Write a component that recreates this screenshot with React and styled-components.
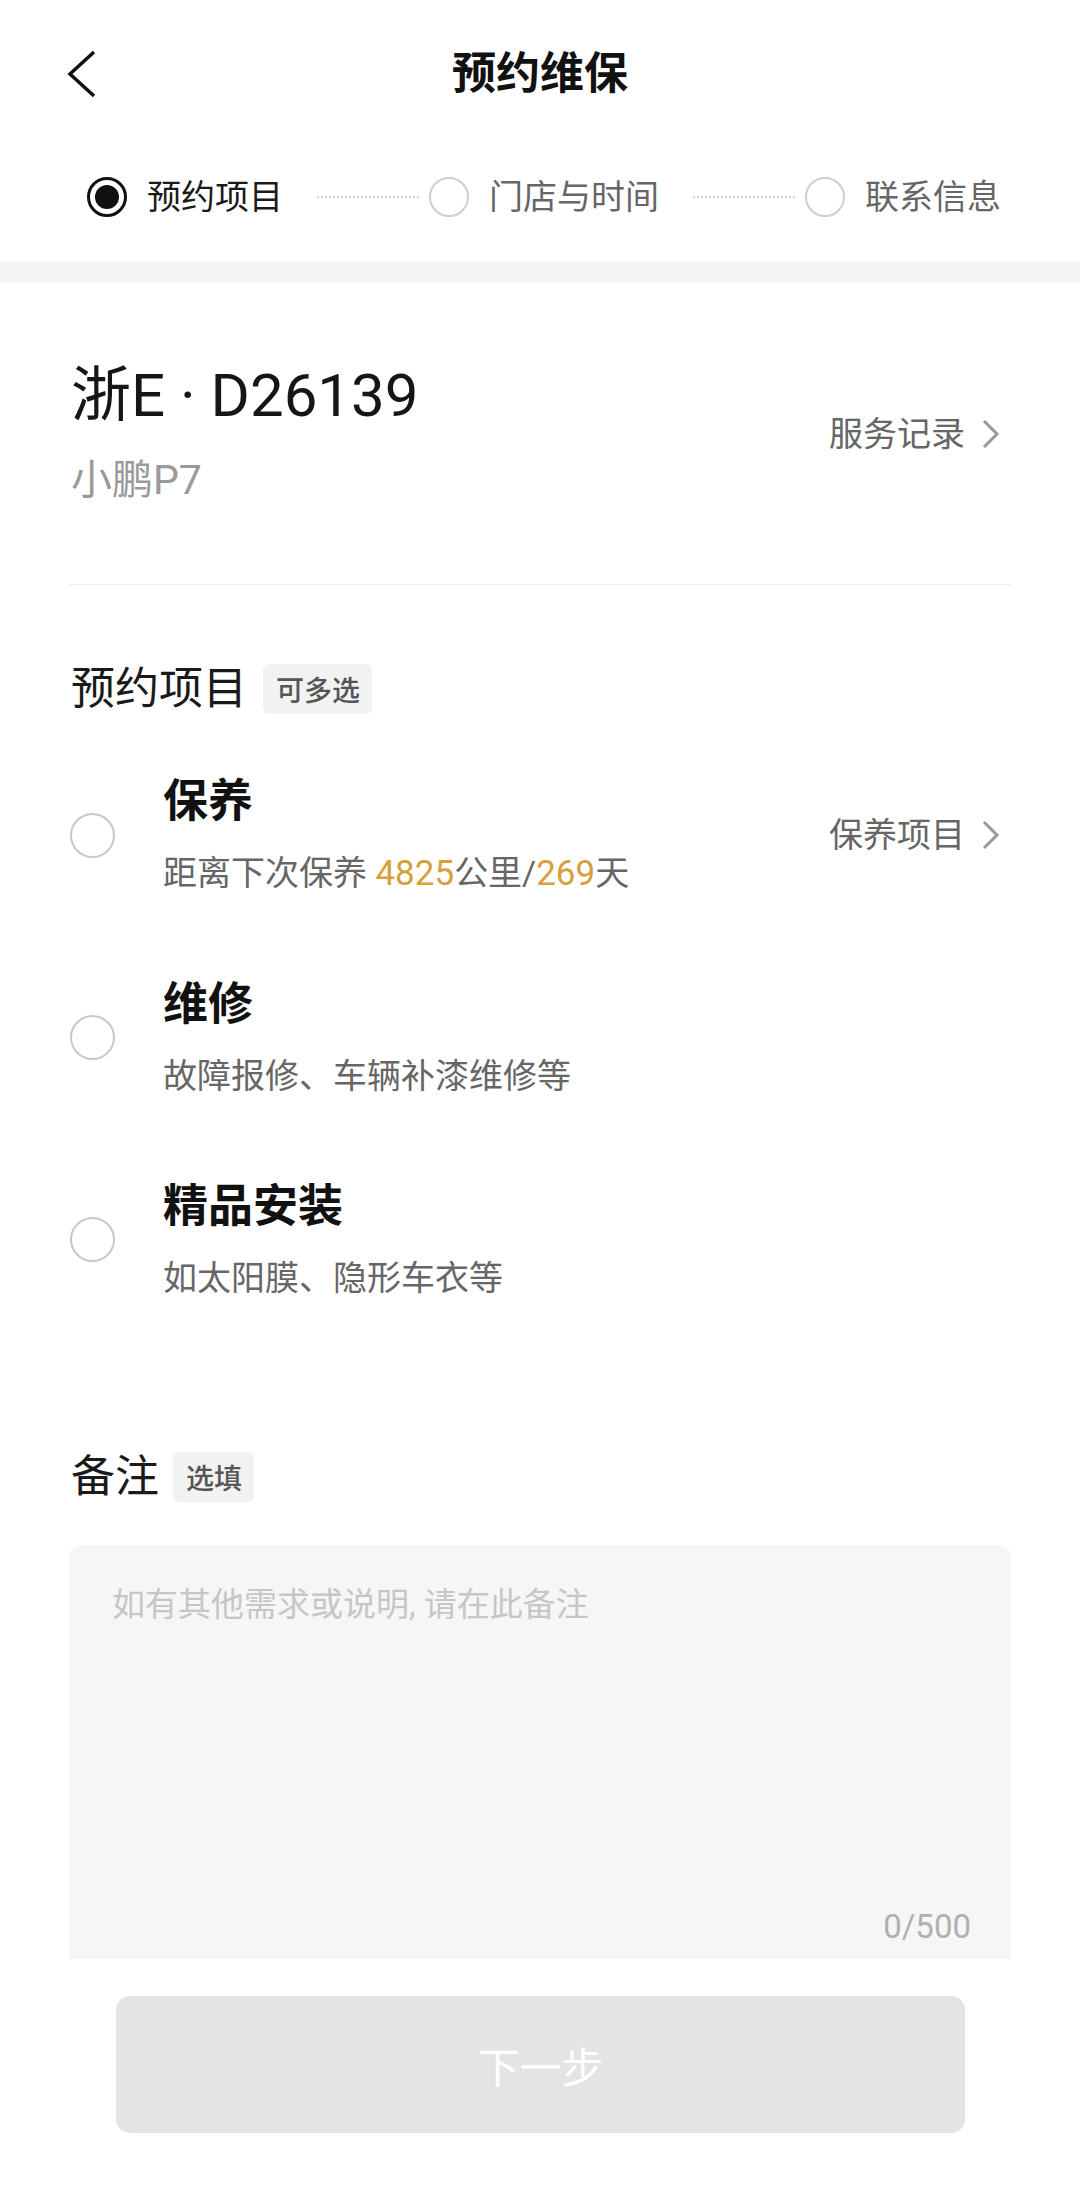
import React from "react";
import styled, { createGlobalStyle } from "styled-components";

const GlobalStyle = createGlobalStyle`
  html, body {
    margin: 0;
    padding: 0;
    background: #ffffff;
  }
  body {
    font-family: Roboto, "Noto Sans CJK SC", sans-serif;
    color: #1a1a1a;
  }
`;

const SPage = styled.div`
  display: flex;
  flex-direction: column;
  width: 1080px;
  min-height: 2192px;
  background: #ffffff;
`;

const SNavBar = styled.div`
  display: grid;
  grid-template-columns: 1fr auto 1fr;
  align-items: center;
  height: 148px;
  padding: 0 67px;
`;

const SBackButton = styled.div`
  display: flex;
  align-items: center;
  width: 40px;
  height: 48px;
`;

const STitle = styled.div`
  font-size: 44px;
  font-weight: 700;
  line-height: 1;
  color: #111111;
`;

const SSteps = styled.div`
  display: flex;
  align-items: center;
  padding: 29px 0 44px 87px;
`;

const SStep = styled.div`
  display: flex;
  align-items: center;
  gap: 20px;
  font-size: 34px;
  line-height: 40px;
  color: ${(p) => (p.$active ? "#1a1a1a" : "#666666")};
`;

const SStepDot = styled.span`
  box-sizing: border-box;
  display: flex;
  align-items: center;
  justify-content: center;
  width: 40px;
  height: 40px;
  border-radius: 50%;
  border: ${(p) => (p.$active ? "3px solid #111111" : "2.5px solid #cfcfcf")};

  &::after {
    content: "";
    display: ${(p) => (p.$active ? "block" : "none")};
    width: 24px;
    height: 24px;
    border-radius: 50%;
    background: #111111;
  }
`;

const SConnector = styled.span`
  width: 102px;
  margin: 0 10px 0 34px;
  border-top: 2px dotted #d2d2d2;
`;

const SBand = styled.div`
  height: 22px;
  background: #f5f5f5;
`;

const SContent = styled.div`
  display: flex;
  flex-direction: column;
  padding: 0 69px;
`;

const SCarRow = styled.div`
  display: flex;
  align-items: center;
  justify-content: space-between;
  padding: 80px 0 80px 2px;
  border-bottom: 1.5px solid #eeeeee;
`;

const SCarInfo = styled.div`
  display: flex;
  flex-direction: column;
  gap: 27px;
`;

const SPlate = styled.div`
  font-size: 60px;
  line-height: 66px;
  color: #161616;
`;

const SModel = styled.div`
  font-size: 41px;
  line-height: 48px;
  color: #9a9a9a;
`;

const SLink = styled.div`
  display: flex;
  align-items: center;
  gap: 16px;
  font-size: 34px;
  line-height: 44px;
  color: #666666;
  padding-right: 11px;
`;

const SSectionHead = styled.div`
  display: flex;
  align-items: center;
  gap: ${(p) => p.$gap}px;
  margin-top: ${(p) => p.$top}px;
  padding-left: 2px;
`;

const SHeadText = styled.div`
  font-size: 44px;
  line-height: 52px;
  color: #1a1a1a;
`;

const STag = styled.span`
  display: flex;
  align-items: center;
  height: 50px;
  padding: 0 12px 0 13px;
  border-radius: 6px;
  background: #f2f2f2;
  font-size: 28px;
  font-weight: 500;
  color: #555555;
`;

const SOptionList = styled.div`
  display: flex;
  flex-direction: column;
  gap: 81px;
  margin-top: 59px;
`;

const SOption = styled.div`
  display: flex;
  align-items: center;
  padding-left: 1px;
`;

const SRadio = styled.span`
  box-sizing: border-box;
  flex: none;
  width: 45px;
  height: 45px;
  border-radius: 50%;
  border: 2.5px solid #c8c8c8;
`;

const SOptionBody = styled.div`
  display: flex;
  flex-direction: column;
  gap: 21px;
  flex: 1;
  margin-left: 48px;
`;

const SOptionTitle = styled.div`
  font-size: 45px;
  font-weight: 700;
  line-height: 56px;
  color: #111111;
`;

const SOptionDesc = styled.div`
  font-size: 34px;
  line-height: 44px;
  color: #666666;
`;

const SHighlight = styled.span`
  font-size: 35px;
  color: #d6a03c;
`;

const SNoteBox = styled.div`
  display: flex;
  flex-direction: column;
  justify-content: space-between;
  box-sizing: border-box;
  height: 414px;
  margin-top: 42px;
  padding: 38px 40px 10px 43px;
  border-radius: 12px 12px 0 0;
  background: #f6f6f6;
`;

const SPlaceholder = styled.div`
  font-size: 33px;
  line-height: 44px;
  color: #c6c6c6;
`;

const SCounter = styled.div`
  align-self: flex-end;
  font-size: 33px;
  line-height: 44px;
  color: #b0b0b0;
`;

const SFooter = styled.div`
  display: flex;
  padding: 37px 115px 60px 116px;
`;

const SNextButton = styled.div`
  display: flex;
  align-items: center;
  justify-content: center;
  flex: 1;
  height: 137px;
  border-radius: 14px;
  background: #e4e4e4;
  font-size: 42px;
  color: #ffffff;
`;

function BackIcon() {
  return (
    <svg width="30" height="48" viewBox="0 0 30 48" fill="none">
      <polyline points="27,2 3,24 27,46" stroke="#111" strokeWidth="3.5" strokeLinejoin="miter" />
    </svg>
  );
}

function ChevronRight() {
  return (
    <svg width="19" height="30" viewBox="0 0 19 30" fill="none">
      <polyline points="3,2 16,15 3,28" stroke="#999" strokeWidth="3" />
    </svg>
  );
}

function Step({ active, label }) {
  return (
    <SStep $active={active}>
      <SStepDot $active={active} />
      {label}
    </SStep>
  );
}

function Option({ title, children, action }) {
  return (
    <SOption>
      <SRadio />
      <SOptionBody>
        <SOptionTitle>{title}</SOptionTitle>
        <SOptionDesc>{children}</SOptionDesc>
      </SOptionBody>
      {action && (
        <SLink>
          {action}
          <ChevronRight />
        </SLink>
      )}
    </SOption>
  );
}

export default function App() {
  return (
    <SPage>
      <GlobalStyle />
      <SNavBar>
        <SBackButton>
          <BackIcon />
        </SBackButton>
        <STitle>预约维保</STitle>
        <span />
      </SNavBar>

      <SSteps>
        <Step active label="预约项目" />
        <SConnector />
        <Step label="门店与时间" />
        <SConnector />
        <Step label="联系信息" />
      </SSteps>

      <SBand />

      <SContent>
        <SCarRow>
          <SCarInfo>
            <SPlate>浙E · D26139</SPlate>
            <SModel>小鹏P7</SModel>
          </SCarInfo>
          <SLink>
            服务记录
            <ChevronRight />
          </SLink>
        </SCarRow>

        <SSectionHead $top={78} $gap={16}>
          <SHeadText>预约项目</SHeadText>
          <STag>可多选</STag>
        </SSectionHead>

        <SOptionList>
          <Option title="保养" action="保养项目">
            距离下次保养 <SHighlight>4825</SHighlight>公里/<SHighlight>269</SHighlight>天
          </Option>
          <Option title="维修">故障报修、车辆补漆维修等</Option>
          <Option title="精品安装">如太阳膜、隐形车衣等</Option>
        </SOptionList>

        <SSectionHead $top={151} $gap={14}>
          <SHeadText>备注</SHeadText>
          <STag>选填</STag>
        </SSectionHead>

        <SNoteBox>
          <SPlaceholder>如有其他需求或说明, 请在此备注</SPlaceholder>
          <SCounter>0/500</SCounter>
        </SNoteBox>
      </SContent>

      <SFooter>
        <SNextButton>下一步</SNextButton>
      </SFooter>
    </SPage>
  );
}
